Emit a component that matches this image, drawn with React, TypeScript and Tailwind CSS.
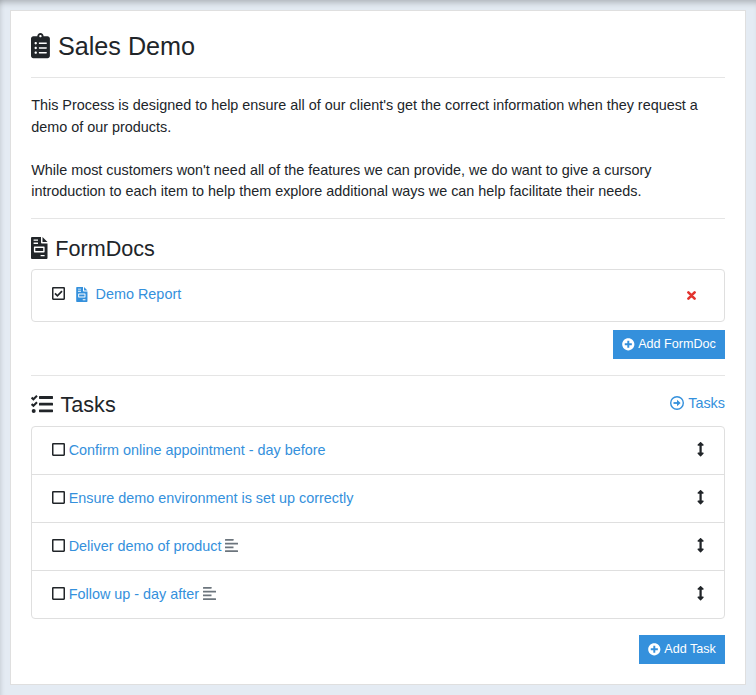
import React from "react";
import { FaClipboardList, FaPlusCircle, FaArrowsAltV } from "react-icons/fa";

function CheckSquare({ checked = false }: { checked?: boolean }) {
  return (
    <svg viewBox="0 0 13 13" className="mb-0.5 h-[13px] w-[13px] shrink-0" fill="none" stroke="#212529">
      <rect x="0.75" y="0.75" width="11.5" height="11.5" rx="0.4" strokeWidth="1.5" />
      {checked && <path d="M3 6.4 5.4 8.8 10 4.1" strokeWidth="1.7" />}
    </svg>
  );
}

function Invoice({ className }: { className: string }) {
  return (
    <svg viewBox="0 0 17 22" className={className} fill="currentColor">
      <path
        fillRule="evenodd"
        d="M1 0H10V5.5Q10 6.5 11 6.5H16.5V21Q16.5 22 15.5 22H1Q0 22 0 21V1Q0 0 1 0ZM2.6 2.5V3.8H7V2.5ZM2.6 5.6V6.9H7V5.6ZM3.5 9.6Q2.9 9.6 2.9 10.2V14.8Q2.9 15.4 3.5 15.4H13Q13.6 15.4 13.6 14.8V10.2Q13.6 9.6 13 9.6ZM4.3 11H12.2V14H4.3ZM9.6 18V19.3H13.6V18Z"
      />
      <path d="M11.5 0 16.5 5.1H11.5Z" />
    </svg>
  );
}

function TaskList() {
  return (
    <svg viewBox="0 0 22 18" className="mb-0.5 h-[18px] w-[22px]" fill="#212529">
      <g fill="none" stroke="#212529" strokeWidth="2">
        <path d="M.6 2.6 2.4 4.3 6 .7" />
        <path d="M.6 9.1 2.4 10.8 6 7.2" />
      </g>
      <circle cx="2.7" cy="15.9" r="2" />
      <rect x="8" y="1.1" width="14" height="2.8" rx="0.6" />
      <rect x="8" y="7.7" width="14" height="2.8" rx="0.6" />
      <rect x="8" y="14.4" width="14" height="2.8" rx="0.6" />
    </svg>
  );
}

function ArrowCircle() {
  return (
    <svg viewBox="0 0 14 14" className="mb-0.5 h-3.5 w-3.5" fill="none" stroke="#3490dc">
      <circle cx="7" cy="7" r="6.3" strokeWidth="1.4" />
      <path d="M3.5 7H8" strokeWidth="1.8" />
      <path d="M7 3.8 10.6 7 7 10.2Z" fill="#3490dc" stroke="none" />
    </svg>
  );
}

function Cross() {
  return (
    <svg viewBox="0 0 9 9" className="ml-auto mt-px h-[9px] w-[9px]" stroke="#e3342f" strokeWidth="2.6" strokeLinecap="round">
      <path d="M1.4 1.4 7.6 7.6M7.6 1.4 1.4 7.6" />
    </svg>
  );
}

function NoteLines() {
  return (
    <svg viewBox="0 0 13 13" className="mb-0.5 ml-1 h-[13px] w-[13px]" fill="#6c757d">
      <rect x="0" y="0" width="8.5" height="1.8" rx="0.2" />
      <rect x="0" y="3.7" width="13" height="1.8" rx="0.2" />
      <rect x="0" y="7.4" width="8.5" height="1.8" rx="0.2" />
      <rect x="0" y="11.2" width="13" height="1.8" rx="0.2" />
    </svg>
  );
}

function AddButton({ label, width }: { label: string; width: string }) {
  return (
    <button className={`${width} flex h-[29px] items-center justify-center bg-[#3490dc] text-[12.6px] leading-[19px] text-white`}>
      <FaPlusCircle className="mr-[3.5px] h-[12.6px] w-[12.6px]" />
      <span>{label}</span>
    </button>
  );
}

const tasks = [
  { title: "Confirm online appointment - day before", note: false },
  { title: "Ensure demo environment is set up correctly", note: false },
  { title: "Deliver demo of product", note: true },
  { title: "Follow up - day after", note: true },
];

export default function App() {
  return (
    <div className="h-[695px] w-[756px] bg-[#e4ebf3] p-2.5 font-['Liberation_Sans',Arial,sans-serif] text-[14.4px] leading-[21.6px] text-[#212529] shadow-[inset_0_7px_7px_-5px_rgba(0,0,0,0.28),inset_5px_0_5px_-4px_rgba(0,0,0,0.1)]">
      <main className="h-[675px] border border-[#dfdfdf] bg-white px-5">
        <header className="flex h-[67px] items-center border-b border-[#e5e5e5] pt-1">
          <FaClipboardList className="h-[25.2px] w-[18.9px]" />
          <h1 className="ml-2 text-[25.2px] leading-[31px]">Sales Demo</h1>
        </header>

        <section className="h-[141px] border-b border-[#e5e5e5] pl-[0.2px] pt-[17px]">
          <p>This Process is designed to help ensure all of our client's get the correct information when they request a demo of our products.</p>
          <p className="mt-[21.6px]">While most customers won't need all of the features we can provide, we do want to give a cursory introduction to each item to help them explore additional ways we can help facilitate their needs.</p>
        </section>

        <section className="h-[157px] border-b border-[#e5e5e5]">
          <div className="flex h-[50px] items-center pt-2">
            <Invoice className="h-[22px] w-[17px]" />
            <h2 className="ml-[7.3px] pt-0.5 text-[21.6px] leading-[26px]">FormDocs</h2>
          </div>
          <div className="flex h-[53px] items-center rounded border border-[#dfdfdf] pb-0.5 pl-5 pr-7">
            <CheckSquare checked />
            <Invoice className="mb-px ml-[11px] h-[15px] w-3 text-[#3490dc]" />
            <a className="ml-[7.6px] text-[#3490dc]">Demo Report</a>
            <Cross />
          </div>
          <div className="mt-2 flex justify-end">
            <AddButton label="Add FormDoc" width="w-28" />
          </div>
        </section>

        <section>
          <div className="flex h-[50px] items-center pt-2">
            <TaskList />
            <h2 className="ml-[7.5px] text-[21.6px] leading-[26px]">Tasks</h2>
            <a className="mb-[3px] ml-auto flex items-center gap-1 text-[#3490dc]">
              <ArrowCircle />
              <span>Tasks</span>
            </a>
          </div>
          <ul className="divide-y divide-[#dfdfdf] rounded border border-[#dfdfdf]">
            {tasks.map((task) => (
              <li key={task.title} className="flex h-12 items-center pl-5 pr-5 last:h-[47px]">
                <CheckSquare />
                <a className="ml-[3.7px] text-[#3490dc]">{task.title}</a>
                {task.note && <NoteLines />}
                <FaArrowsAltV className="mb-0.5 ml-auto h-[14.4px] w-[7.2px]" />
              </li>
            ))}
          </ul>
          <div className="mt-4 flex justify-end">
            <AddButton label="Add Task" width="w-[86px]" />
          </div>
        </section>
      </main>
    </div>
  );
}
